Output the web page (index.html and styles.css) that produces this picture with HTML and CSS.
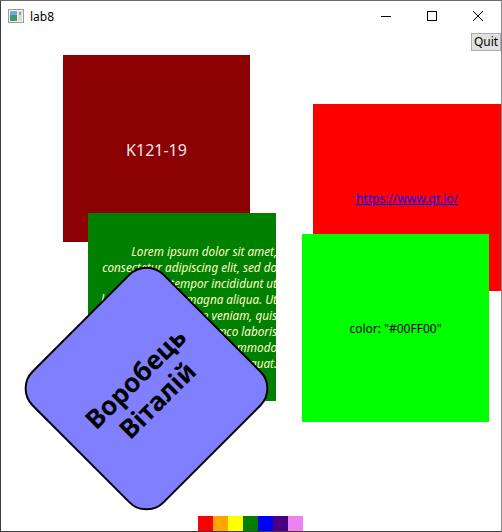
FILE: index.html
```html
<!DOCTYPE html>
<html>
<head>
<meta charset="utf-8">
<link rel="stylesheet" href="styles.css">
</head>
<body>
<div class="window">
  <div class="titlebar">
    <div class="title">
      <svg class="app-icon" width="16" height="16" viewBox="0 0 16 16">
        <rect x="0.5" y="1.5" width="15" height="13" fill="#f4f4f4" stroke="#9a9a9a"/>
        <rect x="2" y="3" width="7" height="10" fill="#3f8fa8"/>
        <rect x="2" y="3" width="7" height="4" fill="#6fb0c8"/>
        <rect x="2" y="9" width="7" height="4" fill="#4a9a60"/>
        <rect x="10" y="3" width="4" height="10" fill="#dcdcdc"/>
        <rect x="11" y="4" width="2" height="3" fill="#7fb56a"/>
      </svg>
      <span class="title-text">lab8</span>
    </div>
    <div class="controls">
      <span class="ctl">
        <svg width="10" height="10" viewBox="0 0 10 10"><path d="M0 5.5H10" stroke="#000" stroke-width="1"/></svg>
      </span>
      <span class="ctl">
        <svg width="10" height="10" viewBox="0 0 10 10"><rect x="0.5" y="0.5" width="9" height="9" fill="none" stroke="#000" stroke-width="1"/></svg>
      </span>
      <span class="ctl">
        <svg width="10" height="10" viewBox="0 0 10 10"><path d="M0 0L10 10M10 0L0 10" stroke="#000" stroke-width="1"/></svg>
      </span>
    </div>
  </div>
  <div class="client">
    <button class="quit">Quit</button>
    <div class="box darkred"><span class="caption">K121-19</span></div>
    <div class="box green">
      <p class="lorem">Lorem ipsum dolor sit amet,<br>consectetur adipiscing elit, sed do<br>eiusmod tempor incididunt ut<br>labore et dolore magna aliqua. Ut<br>enim ad minim veniam, quis<br>nostrud exercitation ullamco laboris<br>nisi ut aliquip ex ea commodo<br>consequat.</p>
    </div>
    <div class="box red"><a class="link" href="#">https://www.qt.io/</a></div>
    <div class="box lime"><span class="color-label">color: "#00FF00"</span></div>
    <div class="diamond"><span class="name">Воробець<br>Віталій</span></div>
    <div class="rainbow">
      <span class="sw c1"></span><span class="sw c2"></span><span class="sw c3"></span><span class="sw c4"></span><span class="sw c5"></span><span class="sw c6"></span><span class="sw c7"></span>
    </div>
  </div>
</div>
</body>
</html>
```
FILE: styles.css
```css
html, body {
  margin: 0;
  padding: 0;
  background: #fff;
}
.window {
  box-sizing: border-box;
  width: 502px;
  height: 532px;
  border: 1px solid #3c3c3c;
  border-top-color: #6a6a6a;
  border-right-color: #8a8a8a;
  display: flex;
  flex-direction: column;
  font-family: "Noto Sans", "Open Sans", sans-serif;
  overflow: hidden;
}
.titlebar {
  height: 30px;
  flex: none;
  display: flex;
  justify-content: space-between;
  align-items: center;
  background: #fff;
}
.title {
  display: flex;
  align-items: center;
  padding-left: 7px;
  gap: 6px;
}
.app-icon { display: block; }
.title-text {
  font-size: 12px;
  color: #000;
}
.controls {
  display: flex;
  height: 30px;
}
.ctl {
  width: 46px;
  display: flex;
  align-items: center;
  justify-content: center;
}
.ctl svg { display: block; }
.client {
  flex: 1;
  position: relative;
  background: #fff;
}
.quit {
  position: absolute;
  left: 470px;
  top: 2px;
  width: 30px;
  height: 18px;
  padding: 0;
  margin: 0;
  background: #e1e1e1;
  border: 1px solid #adadad;
  font-family: "Noto Sans", sans-serif;
  font-size: 12px;
  color: #000;
  line-height: 14px;
}
.box {
  position: absolute;
  display: flex;
  align-items: center;
  justify-content: center;
  overflow: hidden;
}
.darkred {
  left: 62px;
  top: 24px;
  width: 187px;
  height: 187px;
  background: #8b0000;
}
.caption {
  color: #f2e4f0;
  font-size: 16px;
  margin-top: 2px;
}
.green {
  left: 87px;
  top: 182px;
  width: 188px;
  height: 188px;
  background: #008000;
  justify-content: flex-end;
}
.lorem {
  flex: none;
  margin: 0 -1px 0 0;
  text-align: right;
  white-space: nowrap;
  font-style: italic;
  font-size: 11.7px;
  line-height: 16px;
  color: #ffffc8;
}
.red {
  left: 312px;
  top: 73px;
  width: 188px;
  height: 187px;
  background: #ff0000;
}
.link {
  color: #0000ff;
  font-size: 12px;
  text-decoration: underline;
  margin-top: 2px;
}
.lime {
  left: 301px;
  top: 203px;
  width: 187px;
  height: 188px;
  background: #00ff00;
}
.color-label {
  font-size: 12px;
  color: #000;
}
.diamond {
  position: absolute;
  left: 52px;
  top: 264px;
  width: 187px;
  height: 187px;
  box-sizing: border-box;
  border: 2px solid #000;
  border-radius: 25px;
  background: #8080ff;
  transform: rotate(45deg);
  display: flex;
  align-items: center;
  justify-content: center;
}
.name {
  transform: rotate(-90deg);
  font-family: "Noto Sans", sans-serif;
  font-weight: bold;
  font-size: 26px;
  line-height: 31px;
  text-align: center;
  color: #000;
}
.rainbow {
  position: absolute;
  left: 197px;
  top: 485px;
  display: flex;
}
.sw {
  width: 15px;
  height: 16px;
}
.c1 { background: #ff0000; }
.c2 { background: #ffa500; }
.c3 { background: #ffff00; }
.c4 { background: #008000; }
.c5 { background: #0000ff; }
.c6 { background: #4b0082; }
.c7 { background: #ee82ee; }
```
